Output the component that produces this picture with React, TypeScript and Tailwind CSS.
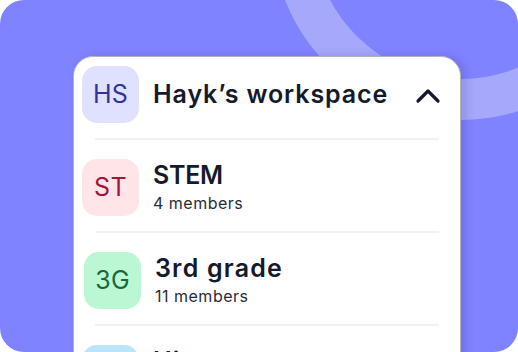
const font = { fontFamily: "Inter, 'Noto Sans', sans-serif" };

type Group = {
  initials: string;
  name: string;
  members: string;
  tile: string;
  ink: string;
  track: string;
  nudge?: string;
};

const groups: Group[] = [
  { initials: "ST", name: "STEM", members: "4 members", tile: "bg-[#ffe4e8]", ink: "text-[#a3163a]", track: "tracking-[-0.3px]" },
  { initials: "3G", name: "3rd grade", members: "11 members", tile: "bg-[#bbf7d3]", ink: "text-[#17693a]", track: "tracking-[1.2px]", nudge: "pl-[10px]" },
  { initials: "HI", name: "History", members: "7 members", tile: "bg-[#bae4fb]", ink: "text-[#0b5a86]", track: "tracking-[1px]" },
];

function Tile({ initials, tile, ink }: { initials: string; tile: string; ink: string }) {
  return (
    <div
      className={`w-[57px] h-[57px] shrink-0 rounded-[15px] flex items-center justify-center text-[25px] font-normal tracking-[0.3px] ${tile} ${ink}`}
    >
      {initials}
    </div>
  );
}

export default function App() {
  return (
    <div className="w-[518px] h-[352px] bg-white" style={font}>
      <div className="relative w-[518px] h-[352px] rounded-[24px] overflow-hidden bg-[#8083ff]">
        {/* decorative ring */}
        <svg className="absolute inset-0" width="518" height="352" viewBox="0 0 518 352">
          <circle cx="461" cy="-69" r="168.5" fill="none" stroke="#a6a8fc" strokeWidth="41" />
        </svg>

        <div className="relative ml-[73px] mt-[56px] w-[388px] h-[330px] rounded-[20px] border border-[#b4b4be] bg-white shadow-[5px_0_10px_rgba(40,40,120,0.18)]">
          {/* workspace header */}
          <div className="flex items-center pl-[8px] pr-[19px] pt-[9px] pb-[15px]">
            <Tile initials="HS" tile="bg-[#e0e1ff]" ink="text-[#33339b]" />
            <div className="ml-[14px] flex-1 text-[25px] font-semibold text-[#141a2b] tracking-[0.9px]">
              Hayk’s workspace
            </div>
            <svg width="26" height="16" viewBox="0 0 26 16" className="mt-[2px]">
              <polyline
                points="3,13 13,3 23,13"
                fill="none"
                stroke="#141a2b"
                strokeWidth="3.2"
                strokeLinecap="round"
                strokeLinejoin="round"
              />
            </svg>
          </div>

          {groups.map((g) => (
            <div key={g.name}>
              <div className="mx-[21px] h-[2px] bg-[#f1f1f4]" />
              <div className={`flex items-center pt-[19px] pb-[15px] ${g.nudge ?? "pl-[8px]"}`}>
                <Tile initials={g.initials} tile={g.tile} ink={g.ink} />
                <div className="ml-[14px] flex flex-col">
                  <span className={`text-[25px] leading-[26px] font-semibold text-[#141a2b] ${g.track}`}>{g.name}</span>
                  <span className="mt-[5px] text-[16px] leading-[20px] tracking-[0.5px] text-[#262b3a]">{g.members}</span>
                </div>
              </div>
            </div>
          ))}
        </div>
      </div>
    </div>
  );
}
